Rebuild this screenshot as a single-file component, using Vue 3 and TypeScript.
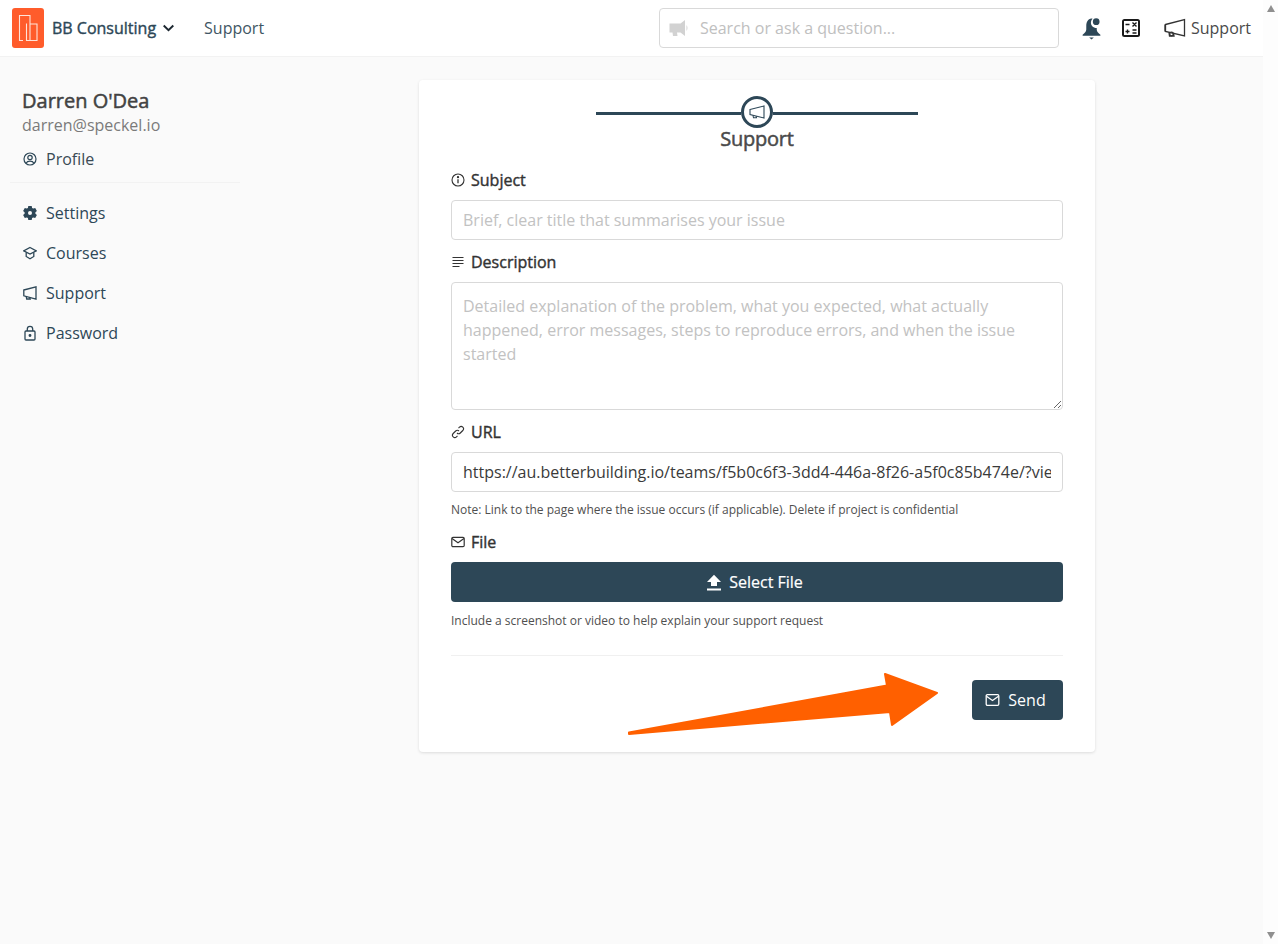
<script setup lang="ts">
const navItems: { label: string; icon: string }[] = [
  { label: 'Settings', icon: 'gear' },
  { label: 'Courses', icon: 'cap' },
  { label: 'Support', icon: 'mega' },
  { label: 'Password', icon: 'lock' },
]
</script>

<template>
  <div class="shell">
    <div class="page">
      <header class="topbar">
        <div class="brand">
          <svg class="logo" width="32" height="40" viewBox="0 0 32 40">
            <rect width="32" height="40" rx="3" fill="#ff5c2b" />
            <path d="M11 32.500H7.500V7.500H18V32.500M14.500 15.500V32.500H25V16H18" fill="none" stroke="#ffe3d8" stroke-width="1.100" />
          </svg>
          <span class="brand-name">BB Consulting</span>
          <svg class="chev" width="13" height="8" viewBox="0 0 12 8"><path d="M1.200 1.500 6 6.200l4.800-4.700" fill="none" stroke="#1c2730" stroke-width="1.900" /></svg>
        </div>
        <a class="top-link">Support</a>
        <div class="search">
          <svg width="20" height="18" viewBox="0 0 20 18" fill="#d2d2d2">
            <path d="M0.500 4.500H11.500L16 1V17L11.500 13.500H8L8.500 17H4L3.500 13.500H0.500Z" />
            <path d="M17.500 6Q19.500 9 17.500 12Z" />
          </svg>
          <span class="search-text">Search or ask a question...</span>
        </div>
        <div class="top-icons">
          <svg width="21" height="23" viewBox="0 0 20 22" fill="#2d4757">
            <path d="M10 1.500C6.500 2 5 5 5 8.500V12C5 14 3.500 15.500 1.500 17V18H18.500V17C16.500 15.500 15 14 15 12V10.500C11.500 10.500 9 8 9.500 4.500 9.700 3.300 10.300 2.300 11 1.600 10.700 1.500 10.300 1.500 10 1.500Z" />
            <circle cx="14.500" cy="4.500" r="3.200" />
            <path d="M7.800 19.500H12.200L10 21.500Z" />
          </svg>
          <svg class="calc" width="18" height="18" viewBox="0 0 18 18">
            <rect width="18" height="18" rx="2.500" fill="#1a1a1a" />
            <rect x="2" y="2" width="14" height="14" fill="#fff" />
            <path d="M3.500 5.500H7.500M10.500 3.500 14.500 7.500M14.500 3.500 10.500 7.500M3.500 12.500H7.500M5.500 10.500V14.500M10.500 11H14.500M10.500 14H14.500" stroke="#1a1a1a" stroke-width="1.400" fill="none" />
          </svg>
          <div class="top-support">
            <svg width="22" height="20" viewBox="0 0 22 20" fill="none" stroke="#333" stroke-width="1.300">
              <path d="M1.500 6.500 20.500 1.500V18L1.500 13.500Z" />
              <path d="M1 6.500V13.500M5 14.500 5.500 18H10L9.500 15.500" />
              <circle cx="7.500" cy="16" r="1.800" />
            </svg>
            <span>Support</span>
          </div>
        </div>
      </header>

      <div class="content">
        <aside class="sidebar">
          <div class="user-name">Darren O'Dea</div>
          <div class="user-mail">darren@speckel.io</div>
          <div class="nav-item profile">
            <svg width="14" height="14" viewBox="0 0 14 14" fill="none" stroke="#2d4757" stroke-width="1.200">
              <circle cx="7" cy="7" r="6" />
              <circle cx="7" cy="5.500" r="2.200" />
              <path d="M3 11.200C4 9.500 5.500 9.200 7 9.200S10 9.500 11 11.200" />
            </svg>
            <span>Profile</span>
          </div>
          <div class="side-divider"></div>
          <div v-for="item in navItems" :key="item.label" class="nav-item">
            <svg v-if="item.icon === 'gear'" width="14" height="14" viewBox="0 0 14 14" fill="#2d4757">
              <path fill-rule="evenodd" d="M5.300 0H8.700L9.100 2 10.200 2.600 12.200 2 13.900 4.900 12.400 6.200V7.800L13.900 9.100 12.200 12 10.200 11.400 9.100 12 8.700 14H5.300L4.900 12 3.800 11.400 1.800 12 .1 9.100 1.600 7.800V6.200L.1 4.900 1.800 2 3.800 2.600 4.900 2ZM7 5A2 2 0 1 0 7 9 2 2 0 1 0 7 5Z" />
            </svg>
            <svg v-else-if="item.icon === 'cap'" width="14" height="14" viewBox="0 0 14 14" fill="none" stroke="#2d4757" stroke-width="1.300">
              <path d="M7 1.500 13.300 4.800 7 8.100 .7 4.800Z" />
              <path d="M3.200 6.500V10.500L7 12.700 10.800 10.500V6.500" />
            </svg>
            <svg v-else-if="item.icon === 'mega'" width="14" height="14" viewBox="0 0 14 14" fill="none" stroke="#2d4757" stroke-width="1.300">
              <path d="M.8 4 13 .9V13.100L.8 9.800Z" />
              <path d="M3.200 10.400 3.700 13H7.200L6.800 11.400" />
            </svg>
            <svg v-else width="14" height="16" viewBox="0 0 14 16" fill="none" stroke="#2d4757" stroke-width="1.300">
              <rect x="2" y="6" width="10" height="9" rx="1" />
              <path d="M4.300 6V4A2.700 2.700 0 0 1 9.700 4V6" />
              <circle cx="7" cy="10.500" r=".8" fill="#2d4757" />
            </svg>
            <span>{{ item.label }}</span>
          </div>
        </aside>

        <main class="main">
          <section class="card">
            <div class="stepper">
              <span class="step-line"></span>
              <span class="step-circle">
                <svg width="16" height="14" viewBox="0 0 16 14" fill="none" stroke="#2d4757" stroke-width="1.100">
                  <path d="M1 4.500 15 1V13L1 9.500Z" />
                  <path d="M4 10.500 4.500 12.800H7.500L7.200 11.200" />
                </svg>
              </span>
              <span class="step-line"></span>
            </div>
            <h2 class="step-title">Support</h2>

            <label class="field-label label-subject">
              <svg width="14" height="14" viewBox="0 0 14 14" fill="none" stroke="#333" stroke-width="1.100">
                <circle cx="7" cy="7" r="6" />
                <path d="M7 6.200V10.200" stroke-width="1.300" />
                <circle cx="7" cy="4.200" r=".6" fill="#333" />
              </svg>
              <span>Subject</span>
            </label>
            <input class="input" placeholder="Brief, clear title that summarises your issue" />

            <label class="field-label">
              <svg width="14" height="14" viewBox="0 0 14 14" fill="none" stroke="#333" stroke-width="1.200">
                <path d="M1.500 2.500H12.500M1.500 5.500H12.500M1.500 8.500H12.500M1.500 11.500H8.500" />
              </svg>
              <span>Description</span>
            </label>
            <textarea class="input textarea" placeholder="Detailed explanation of the problem, what you expected, what actually happened, error messages, steps to reproduce errors, and when the issue started"></textarea>

            <label class="field-label label-url">
              <svg width="14" height="14" viewBox="0 0 14 14" fill="none" stroke="#333" stroke-width="1.100">
                <path d="M6 8A2.300 2.300 0 0 0 9.300 8L11.800 5.500A2.300 2.300 0 0 0 8.500 2.200L7.500 3.200" />
                <path d="M8 6A2.300 2.300 0 0 0 4.700 6L2.200 8.500A2.300 2.300 0 0 0 5.500 11.800L6.500 10.800" />
              </svg>
              <span>URL</span>
            </label>
            <input class="input url-input" value="https://au.betterbuilding.io/teams/f5b0c6f3-3dd4-446a-8f26-a5f0c85b474e/?view=support" />
            <p class="note">Note: Link to the page where the issue occurs (if applicable). Delete if project is confidential</p>

            <label class="field-label label-file">
              <svg width="14" height="14" viewBox="0 0 14 14" fill="none" stroke="#333" stroke-width="1.200">
                <rect x=".8" y="2.300" width="12.400" height="9.400" rx="1.200" />
                <path d="M1 3.500 7 7.800 13 3.500" />
              </svg>
              <span>File</span>
            </label>
            <button class="select-btn" type="button">
              <svg width="16" height="17" viewBox="0 0 16 17" fill="#fff">
                <path d="M8 .8 15 8H11V12H5V8H1Z" />
                <rect x="1" y="14.500" width="14" height="2" />
              </svg>
              <span>Select File</span>
            </button>
            <p class="note note-file">Include a screenshot or video to help explain your support request</p>

            <div class="card-divider"></div>
            <div class="actions">
              <button class="send-btn" type="button">
                <svg width="15" height="12" viewBox="0 0 14 12" fill="none" stroke="#fff" stroke-width="1.300">
                  <rect x=".7" y=".7" width="12.600" height="10.600" rx="1.200" />
                  <path d="M1 2.200 7 6.500 13 2.200" />
                </svg>
                <span>Send</span>
              </button>
            </div>
          </section>
        </main>
      </div>
    </div>

    <div class="scrollbar">
      <span class="arrow-up"></span>
      <span class="arrow-down"></span>
    </div>

    <svg class="annotation" width="320" height="70" viewBox="0 0 320 70">
      <path d="M9 60.500 267 13.500 265 2 317 21 272 53 270 40 9 62Z" fill="#ff6000" stroke="#ff6000" stroke-width="2" stroke-linejoin="round" />
    </svg>
  </div>
</template>

<style>
html, body { margin: 0; background: #fafafa; overflow: hidden; }
</style>

<style scoped>
.shell {
  position: relative;
  display: flex;
  height: 944px;
  width: 1278px;
  overflow: hidden;
  font-family: "Open Sans", "Noto Sans", sans-serif;
  font-size: 16px;
  color: #333;
}
.page { flex: 1; min-width: 0; background: #fafafa; }
.scrollbar {
  width: 15px;
  background: #fdfdfd;
  display: flex;
  flex-direction: column;
  justify-content: space-between;
  align-items: center;
  padding: 5px 0;
  box-sizing: border-box;
}
.arrow-up, .arrow-down { width: 0; height: 0; border-left: 4.500px solid transparent; border-right: 4.500px solid transparent; }
.arrow-up { border-bottom: 7px solid #8f8f8f; }
.arrow-down { border-top: 7px solid #8f8f8f; }

.topbar {
  height: 57px;
  box-sizing: border-box;
  display: flex;
  align-items: center;
  background: #fff;
  border-bottom: 1px solid #f2f2f2;
  padding: 0 12px;
}
.brand { display: flex; align-items: center; }
.brand-name { margin-left: 8px; font-weight: 500; color: #2d4757; -webkit-text-stroke: 0.4px currentColor; }
.chev { margin-left: 6px; }
.top-link { margin-left: 29px; color: #3f5664; }
.search {
  margin-left: auto;
  width: 400px;
  height: 40px;
  box-sizing: border-box;
  display: flex;
  align-items: center;
  gap: 11px;
  padding: 0 9px;
  background: #fff;
  border: 1px solid #d9d9d9;
  border-radius: 4px;
}
.search-text { color: #c0c0c0; }
.top-icons { display: flex; align-items: center; margin-left: 22px; }
.calc { margin-left: 20px; }
.top-support { display: flex; align-items: center; gap: 5px; margin-left: 24px; color: #4a4a4a; }

.content { display: flex; }
.sidebar { width: 230px; margin-left: 10px; padding-top: 31px; box-sizing: border-box; flex: none; }
.user-name { margin-left: 12px; font-size: 20px; line-height: 26px; font-weight: 500; color: #424242; -webkit-text-stroke: 0.5px currentColor; }
.user-mail { margin-left: 12px; line-height: 22px; color: #7a7a7a; }
.nav-item { display: flex; align-items: center; height: 40px; padding-left: 13px; gap: 9px; color: #2d4757; }
.nav-item svg { width: 14px; flex: none; }
.nav-item.profile { height: 36px; margin-top: 5px; color: #3a4a55; }
.side-divider { height: 1px; background: #f2f2f2; margin: 5px 0 10px; }

.main { flex: 1; display: flex; justify-content: flex-start; padding: 23px 0 0 179px; }
.card {
  width: 676px;
  height: 672px;
  box-sizing: border-box;
  padding: 16px 32px 0;
  background: #fff;
  border-radius: 4px;
  box-shadow: 0 1px 3px rgba(0, 0, 0, 0.12);
}
.stepper { display: flex; align-items: center; justify-content: center; height: 32px; }
.step-line { width: 145px; height: 3px; margin-top: 2px; background: #2d4757; }
.step-circle {
  width: 32px;
  height: 32px;
  box-sizing: border-box;
  border: 3px solid #2d4757;
  border-radius: 50%;
  display: flex;
  align-items: center;
  justify-content: center;
}
.step-title { margin: 0; text-align: center; font-size: 20px; line-height: 22px; font-weight: 500; letter-spacing: -0.25px; color: #4a4a4a; -webkit-text-stroke: 0.5px currentColor; }
.field-label { display: flex; align-items: center; gap: 6px; height: 24px; margin-top: 10px; font-weight: 500; color: #333; }
.field-label span { -webkit-text-stroke: 0.4px currentColor; }
.label-subject { margin-top: 18px; }
.input {
  display: block;
  width: 100%;
  height: 40px;
  box-sizing: border-box;
  margin-top: 8px;
  padding: 0 11px;
  border: 1px solid #d9d9d9;
  border-radius: 4px;
  font: inherit;
  color: #3a3a3a;
  background: #fff;
  outline: none;
}
.input::placeholder { color: #c2c2c2; opacity: 1; }
.textarea { height: 128px; padding: 11px; line-height: 24px; }
.note { margin: 10px 0 0; font-size: 12px; line-height: 16px; color: #4f4f4f; }
.label-file { margin-top: 12px; }
.select-btn, .send-btn {
  display: flex;
  align-items: center;
  justify-content: center;
  height: 40px;
  border: 0;
  border-radius: 4px;
  background: #2d4757;
  color: #fff;
  font: inherit;
}
.select-btn { width: 100%; margin-top: 8px; gap: 7px; padding: 0 5px 0 0; font-weight: 500; -webkit-text-stroke: 0.2px currentColor; }
.note-file { margin-top: 11px; }
.card-divider { height: 1px; background: #f0f0f0; margin-top: 26px; }
.actions { display: flex; justify-content: flex-end; margin-top: 24px; }
.send-btn { width: 91px; gap: 8px; padding: 0 4px 0 0; }
.annotation { position: absolute; left: 620px; top: 672px; pointer-events: none; }
</style>
